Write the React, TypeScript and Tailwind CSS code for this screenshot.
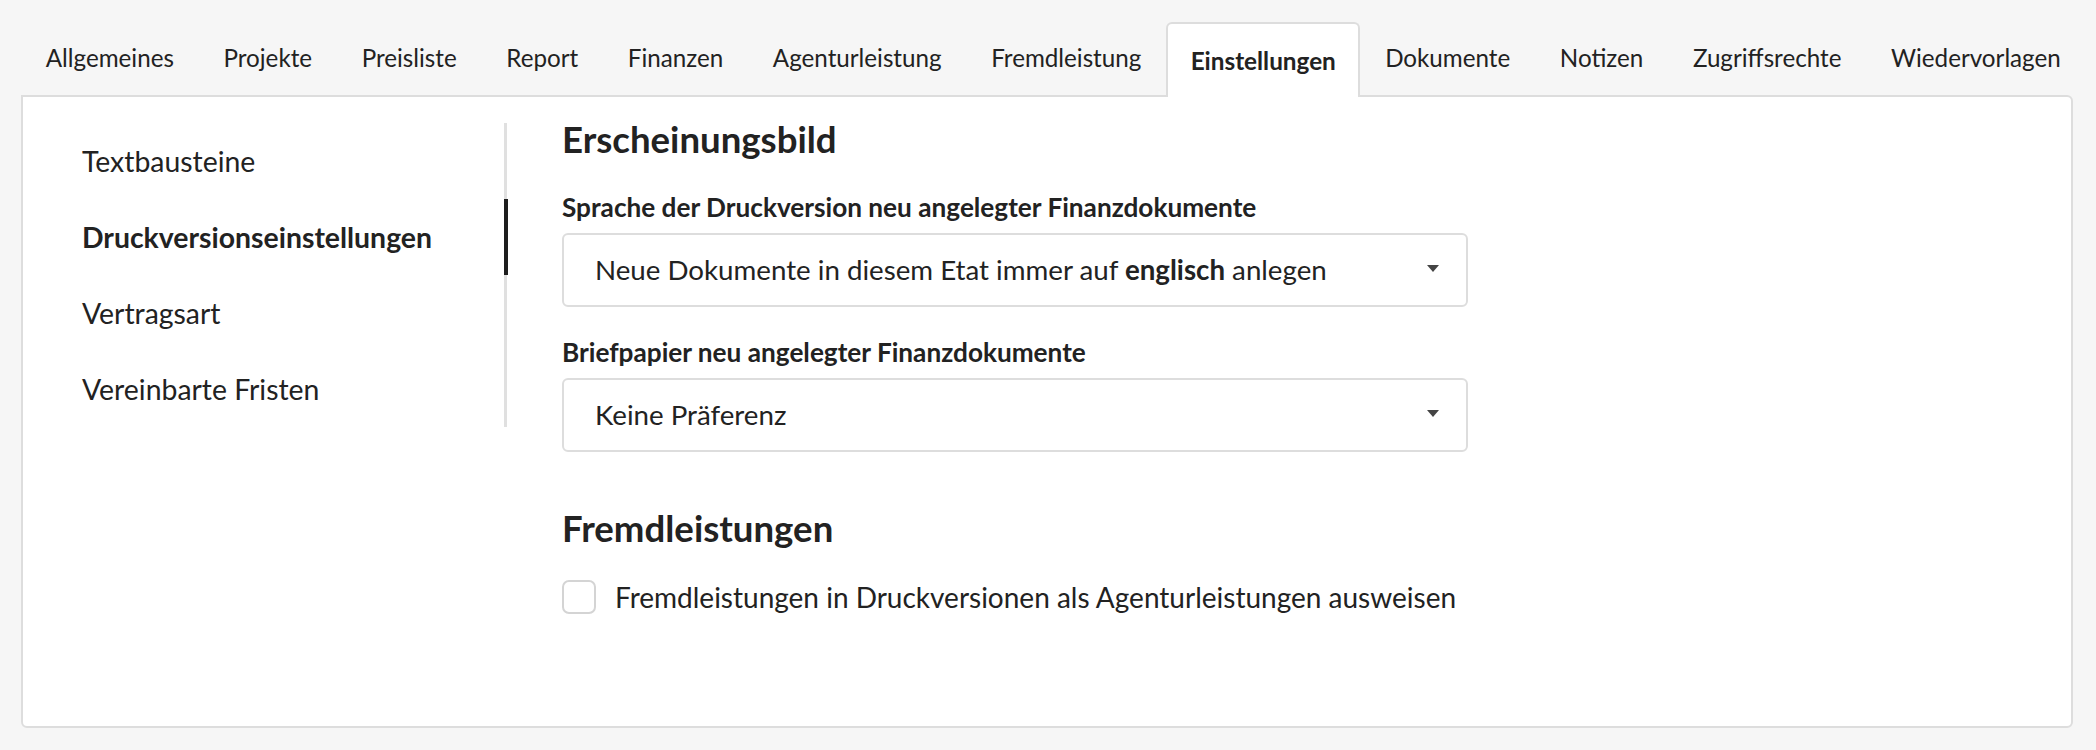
const tabs = [
  "Allgemeines",
  "Projekte",
  "Preisliste",
  "Report",
  "Finanzen",
  "Agenturleistung",
  "Fremdleistung",
  "Einstellungen",
  "Dokumente",
  "Notizen",
  "Zugriffsrechte",
  "Wiedervorlagen",
];

const sideItems = ["Textbausteine", "Druckversionseinstellungen", "Vertragsart", "Vereinbarte Fristen"];

const Caret = () => (
  <svg width="12" height="7" viewBox="0 0 12 7" className="mb-[4px] shrink-0">
    <path d="M0 0 L12 0 L6 7 Z" fill="#444" />
  </svg>
);

const Select = ({ children }: { children: React.ReactNode }) => (
  <div className="flex h-[74px] w-[906px] items-center justify-between rounded-md border-2 border-[#dddddd] bg-white pl-[31px] pr-[27px] text-[27.7px] text-[#222]">
    <span>{children}</span>
    <Caret />
  </div>
);

export default function App() {
  const active = "Einstellungen";
  return (
    <div className="min-h-screen w-full bg-[#f6f6f6] pt-[22px] pl-[21px] pr-[23px] font-[Lato,sans-serif] text-[#222]">
      <nav className="flex items-end">
        {tabs.map((t) =>
          t === active ? (
            <div
              key={t}
              className="relative z-10 -mb-[2px] flex h-[75px] items-center rounded-t-[6px] border-2 border-b-0 border-[#dddddd] bg-white px-[22.5px] pt-[2px] text-[24.3px] font-bold"
            >
              {t}
            </div>
          ) : (
            <div key={t} className="flex h-[73px] items-center px-[24.8px] text-[24.2px]">
              {t}
            </div>
          )
        )}
      </nav>
      <div className="flex h-[633px] rounded-b-md rounded-tr-md border-2 border-[#dddddd] bg-white">
        <aside className="w-[484px] shrink-0 pt-[26px]">
          <ul className="border-r-[3px] border-[#e0e0e0]">
            {sideItems.map((s) => (
              <li
                key={s}
                className={
                  s === "Druckversionseinstellungen"
                    ? "-mr-[4px] flex h-[76px] items-center border-r-[4px] border-[#1e1e1e] pl-[59px] text-[28.4px] font-bold"
                    : "flex h-[76px] items-center pl-[59px] text-[28.4px]"
                }
              >
                {s}
              </li>
            ))}
          </ul>
        </aside>
        <main className="pl-[55px] pt-[20px]">
          <h2 className="text-[36.6px] font-bold leading-[44px]">Erscheinungsbild</h2>
          <label className="mt-[30px] block text-[26.2px] font-bold leading-[32px]">
            Sprache der Druckversion neu angelegter Finanzdokumente
          </label>
          <div className="mt-[10px]">
            <Select>
              Neue Dokumente in diesem Etat immer auf <b>englisch</b> anlegen
            </Select>
          </div>
          <label className="mt-[29px] block text-[26.2px] font-bold leading-[32px]">
            Briefpapier neu angelegter Finanzdokumente
          </label>
          <div className="mt-[10px]">
            <Select>Keine Präferenz</Select>
          </div>
          <h2 className="mt-[54px] text-[36.6px] font-bold leading-[44px]">Fremdleistungen</h2>
          <label className="mt-[26px] flex items-center gap-[19px] text-[28px]">
            <span className="h-[34px] w-[34px] rounded-[7px] border-2 border-[#d4d4d4] bg-white" />
            Fremdleistungen in Druckversionen als Agenturleistungen ausweisen
          </label>
        </main>
      </div>
    </div>
  );
}
